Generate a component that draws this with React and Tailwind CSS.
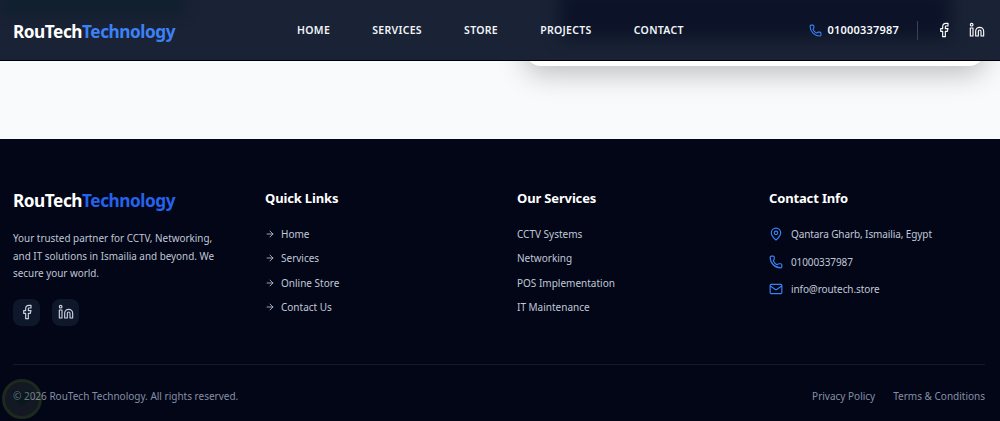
import React from "react";
import { Phone, MapPin, Mail, ArrowRight, Facebook, Linkedin } from "lucide-react";

const font = "font-['Noto_Sans','Open_Sans',sans-serif]";

function Logo({ blue }) {
  return (
    <div className="text-[17.2px] font-bold leading-[28px] tracking-[-0.45px] text-white">
      RouTech<span className={blue}>Technology</span>
    </div>
  );
}

const nav = ["HOME", "SERVICES", "STORE", "PROJECTS", "CONTACT"];
const links = ["Home", "Services", "Online Store", "Contact Us"];
const services = ["CCTV Systems", "Networking", "POS Implementation", "IT Maintenance"];

function Heading({ children }) {
  return <h3 className="text-[13px] font-bold leading-[20px] tracking-[-0.15px] text-white">{children}</h3>;
}

export default function App() {
  return (
    <div className={`${font} h-[421px] w-[1000px] overflow-hidden bg-[#f8fafc]`}>
      <header className="relative z-10 flex h-[61px] items-center overflow-hidden border-b border-black bg-[#1a2235] pl-[13px] pr-[15px]">
        <div className="absolute left-[560px] right-[50px] -top-[10px] h-[48px] bg-[#0c1328] blur-[8px]" />
        <div className="absolute left-0 -top-[4px] h-[20px] w-[185px] bg-[#10202f] blur-[6px]" />
        <div className="relative flex w-full items-center">
          <div className="mt-[3px]"><Logo blue="text-[#3b82f6]" /></div>
          <nav className="ml-[122px] flex gap-[42.2px] text-[10.5px] font-semibold leading-[16px] tracking-[0.3px] text-[#f1f5f9]">
            {nav.map((n) => (
              <span key={n}>{n}</span>
            ))}
          </nav>
          <div className="ml-auto flex items-center">
            <Phone className="h-[13px] w-[13px] text-[#3b82f6]" strokeWidth={2} />
            <span className="ml-[6px] text-[11px] font-semibold tracking-[0.2px] text-[#f8fafc]">01000337987</span>
            <div className="mx-[18px] h-[19px] w-px bg-[#3a4356]" />
            <Facebook className="h-[16px] w-[16px] text-white" strokeWidth={1.7} />
            <Linkedin className="ml-[17px] h-[16px] w-[16px] text-white" strokeWidth={1.7} />
          </div>
        </div>
      </header>

      <main className="flex h-[78px] justify-end pr-[15px]">
        <div className="-mt-[40px] h-[45px] w-[460px] rounded-b-[16px] bg-white shadow-[0_8px_28px_rgba(0,0,0,0.24)]" />
      </main>

      <footer className="relative h-[282px] bg-[#020617] pl-[13px] pr-[15px] pt-[49px]">
        <div className="grid h-[177px] grid-cols-4 gap-x-[36px] border-b border-[#141a2b]">
          <div>
            <div className="-mt-[1px]"><Logo blue="text-[#2563eb]" /></div>
            <p className="mt-[15px] text-[9.9px] leading-[17.6px] text-[#c0c8d6]">
              Your trusted partner for CCTV, Networking,
              <br />
              and IT solutions in Ismailia and beyond. We
              <br />
              secure your world.
            </p>
            <div className="mt-[16px] flex gap-[12px]">
              <div className="flex h-[27px] w-[27px] items-center justify-center rounded-[8px] bg-[#0f172a]">
                <Facebook className="h-[16px] w-[16px] text-[#cbd5e1]" strokeWidth={1.7} />
              </div>
              <div className="flex h-[27px] w-[27px] items-center justify-center rounded-[8px] bg-[#0f172a]">
                <Linkedin className="h-[16px] w-[16px] text-[#cbd5e1]" strokeWidth={1.7} />
              </div>
            </div>
          </div>
          <div>
            <Heading>Quick Links</Heading>
            <ul className="mt-[18px] flex flex-col gap-[8px] text-[10px] leading-[16.3px] text-[#c0c8d6]">
              {links.map((l) => (
                <li key={l} className="flex items-center gap-[6px]">
                  <ArrowRight className="h-[10px] w-[10px]" />
                  {l}
                </li>
              ))}
            </ul>
          </div>
          <div>
            <Heading>Our Services</Heading>
            <ul className="mt-[18px] flex flex-col gap-[8px] text-[10px] leading-[16.3px] text-[#c0c8d6]">
              {services.map((l) => (
                <li key={l}>{l}</li>
              ))}
            </ul>
          </div>
          <div>
            <Heading>Contact Info</Heading>
            <ul className="mt-[18px] flex flex-col gap-[11.5px] text-[10px] leading-[16px] tracking-[-0.1px] text-[#c0c8d6]">
              <li className="flex items-center gap-[8px]">
                <MapPin className="h-[14px] w-[14px] text-[#3b82f6]" />
                Qantara Gharb, Ismailia, Egypt
              </li>
              <li className="flex items-center gap-[8px]">
                <Phone className="h-[14px] w-[14px] text-[#3b82f6]" />
                01000337987
              </li>
              <li className="flex items-center gap-[8px]">
                <Mail className="h-[14px] w-[14px] text-[#3b82f6]" />
                info@routech.store
              </li>
            </ul>
          </div>
        </div>
        <div className="mt-[23px] flex items-center justify-between text-[10px] leading-[16px] text-[#858fa3]">
          <span>© 2026 RouTech Technology. All rights reserved.</span>
          <div className="flex gap-[18px]">
            <span>Privacy Policy</span>
            <span>Terms &amp; Conditions</span>
          </div>
        </div>
        <svg className="absolute bottom-[1px] left-[1px] h-[42px] w-[42px] opacity-30 blur-[0.7px]" viewBox="0 0 42 42" fill="none">
          <circle cx="21" cy="21" r="18.5" fill="#5a6650" fillOpacity="0.65" stroke="#5a7a2a" strokeWidth="3" />
          <path d="M10 13c3-2 7-1 11 3 4-4 8-5 11-3 0 7-5 11-11 15-6-4-11-8-11-15z" fill="#1d4034" />
        </svg>
      </footer>
    </div>
  );
}
